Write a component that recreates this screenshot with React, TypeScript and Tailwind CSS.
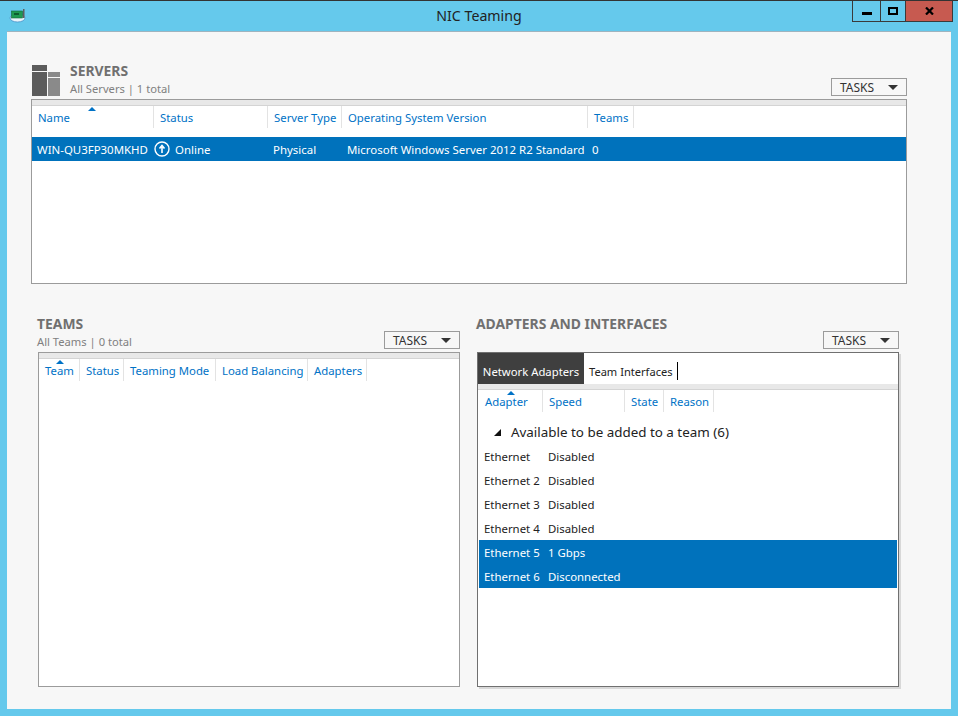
import React from "react";

const FONT = "font-['Open_Sans','Noto_Sans',sans-serif]";

function Tasks() {
  return (
    <div className="flex h-[18px] w-[76px] items-center border border-[#9b9b9b] bg-[#f7f7f7] pl-[8px] pr-[8px] text-[12px] text-[#333]">
      <span className="flex-1 pt-px">TASKS</span>
      <span className="h-0 w-0 border-x-[5px] border-t-[5px] border-x-transparent border-t-[#333]" />
    </div>
  );
}

function Strip() {
  return <div className="h-[6px] border-b border-[#d4d4d4] bg-[#e8e8e8]" />;
}

function Header({ cols, sortX }: { cols: [string, number][]; sortX: number }) {
  return (
    <div className="relative flex h-[25px] text-[11.35px] text-[#0072c6]">
      <span
        className="absolute top-px h-0 w-0 border-x-[4px] border-b-[4px] border-x-transparent border-b-[#0072c6]"
        style={{ left: sortX }}
      />
      {cols.map(([t, w]) => (
        <div
          key={t}
          style={{ width: w }}
          className="flex h-[22px] shrink-0 items-center border-r border-[#e3e3e3] pl-[6px] pt-[2px] whitespace-nowrap"
        >
          {t}
        </div>
      ))}
    </div>
  );
}

function Row({ a, b, sel }: { a: string; b: string; sel?: boolean }) {
  return (
    <div className={`flex h-[24px] items-center pt-[2px] text-[11.4px] ${sel ? "bg-[#0072bc] text-white" : "text-[#222]"}`}>
      <span className="w-[69px] pl-[5px] whitespace-nowrap">{a}</span>
      <span className="whitespace-nowrap">{b}</span>
    </div>
  );
}

export default function App() {
  return (
    <div className={`flex h-[716px] w-[958px] flex-col overflow-hidden border-t border-[#333] bg-[#65c9ec] ${FONT}`}>
      <div className="grid h-[30px] grid-cols-[1fr_auto_1fr]">
        <div className="pl-[9px] pt-[5px]">
          <svg width="17" height="17" viewBox="0 0 17 17">
            <ellipse cx="8.5" cy="12" rx="7.5" ry="4" fill="#e8f3fa" stroke="#4a90c8" strokeWidth="0.8" />
            <rect x="2.5" y="5" width="11" height="7" fill="#1f9a50" stroke="#14643a" strokeWidth="0.6" />
            <rect x="5" y="7" width="5" height="2" fill="#0d5c30" />
            <rect x="14" y="3" width="1.5" height="9" fill="#5d5d5d" />
          </svg>
        </div>
        <div className="pt-[6px] text-[14.2px] leading-[18px] text-[#222]">NIC Teaming</div>
        <div className="flex justify-end pr-[5px]">
          <div className="flex h-[21px] border border-t-0 border-[#3a3a3a]">
            <div className="flex w-[28px] items-end justify-center border-r border-[#3a3a3a] pb-[6px]">
              <div className="h-[3px] w-[10px] bg-black" />
            </div>
            <div className="flex w-[25px] items-start justify-center border-r border-[#3a3a3a] pt-[6px]">
              <div className="h-[8px] w-[10px] border-2 border-black" />
            </div>
            <div className="flex w-[46px] items-center justify-center bg-[#c75a50]">
              <svg width="9" height="8" viewBox="0 0 9 8">
                <path d="M1 0.5 L8 7.5 M8 0.5 L1 7.5" stroke="#000" strokeWidth="2.2" />
              </svg>
            </div>
          </div>
        </div>
      </div>

      <main className="ml-[7px] flex h-[678px] w-[944px] flex-col border-t border-[#9fb4bf] bg-[#f7f7f7] pl-[24px]">
        {/* Servers */}
        <section className="flex w-[876px] flex-col pt-[33px]">
          <div className="flex h-[34px] items-end">
            <svg width="29" height="31" viewBox="0 0 29 31" className="mb-[3px] ml-[1px] shrink-0">
              <rect x="0" y="0" width="15" height="6" fill="#5c5c5c" />
              <rect x="0" y="7" width="15" height="24" fill="#5c5c5c" />
              <rect x="16" y="7" width="12" height="5" fill="#8a8a8a" />
              <rect x="16" y="13" width="12" height="18" fill="#8a8a8a" />
            </svg>
            <div className="ml-[9px] flex-1 pb-[1px]">
              <div className="pb-px text-[13.9px] leading-[16px] font-bold text-[#707070]">SERVERS</div>
              <div className="text-[11.2px] leading-[18px] text-[#808080]">All Servers | 1 total</div>
            </div>
            <div className="pb-[3px]">
              <Tasks />
            </div>
          </div>
          <div className="h-[185px] border border-[#9b9b9b] bg-white">
            <Strip />
            <Header
              sortX={56}
              cols={[
                ["Name", 122],
                ["Status", 114],
                ["Server Type", 74],
                ["Operating System Version", 246],
                ["Teams", 46],
              ]}
            />
            <div className="mt-[6px] flex h-[24px] items-center bg-[#0072bc] pt-px text-[11.45px] whitespace-nowrap text-white">
              <span className="w-[122px] pl-[5px]">WIN-QU3FP30MKHD</span>
              <span className="flex w-[114px] items-center gap-[5px]">
                <svg width="16" height="16" viewBox="0 0 16 16">
                  <circle cx="8" cy="8" r="7" fill="none" stroke="#fff" strokeWidth="1.4" />
                  <path d="M8 12V6M5.5 7.5L8 4.5L10.5 7.5" fill="none" stroke="#fff" strokeWidth="1.6" />
                </svg>
                Online
              </span>
              <span className="w-[74px] pl-[5px]">Physical</span>
              <span className="w-[245px] pl-[5px]">Microsoft Windows Server 2012 R2 Standard</span>
              <span className="pl-[5px]">0</span>
            </div>
          </div>
        </section>

        <div className="mt-[32px] flex">
          {/* Teams */}
          <section className="ml-[7px] flex w-[422px] flex-col">
            <div className="flex h-[36px] items-start">
              <div className="-ml-[1px] flex-1">
                <div className="text-[13.9px] leading-[16px] font-bold text-[#707070]">TEAMS</div>
                <div className="pt-[1px] text-[11.2px] leading-[18px] text-[#808080]">All Teams | 0 total</div>
              </div>
              <div className="pt-[15px]">
                <Tasks />
              </div>
            </div>
            <div className="h-[335px] border border-[#9b9b9b] bg-white">
              <Strip />
              <Header
                sortX={17}
                cols={[
                  ["Team", 41],
                  ["Status", 44],
                  ["Teaming Mode", 92],
                  ["Load Balancing", 92],
                  ["Adapters", 59],
                ]}
              />
            </div>
          </section>

          {/* Adapters */}
          <section className="ml-[17px] flex w-[422px] flex-col">
            <div className="flex h-[36px] items-start">
              <div className="-ml-[1px] flex-1 text-[13.9px] leading-[16px] font-bold whitespace-nowrap text-[#707070]">
                ADAPTERS AND INTERFACES
              </div>
              <div className="pt-[15px]">
                <Tasks />
              </div>
            </div>
            <div className="h-[335px] border border-[#707070] bg-white shadow-[2px_2px_0_#d8d8d8]">
              <div className="flex h-[31px]">
                <div className="flex w-[106px] items-center justify-center bg-[#3f3f3f] pt-[8px] text-[11.3px] whitespace-nowrap text-white">
                  Network Adapters
                </div>
                <div className="ml-[5px] flex items-center pt-[8px] text-[11.1px] whitespace-nowrap text-[#222]">
                  Team Interfaces
                </div>
                <div className="mt-[9px] ml-[4px] h-[18px] w-px bg-black" />
              </div>
              <Strip />
              <div className="ml-px">
                <Header
                  sortX={28}
                  cols={[
                    ["Adapter", 64],
                    ["Speed", 82],
                    ["State", 39],
                    ["Reason", 50],
                  ]}
                />
              </div>
              <div className="flex h-[29px] items-center pl-[16px] pt-[5px] text-[13.4px] text-[#222]">
                <svg width="7" height="7" viewBox="0 0 7 7">
                  <path d="M7 0V7H0Z" fill="#111" />
                </svg>
                <span className="ml-[10px] whitespace-nowrap">Available to be added to a team (6)</span>
              </div>
              <div className="ml-px w-[418px]">
                <Row a="Ethernet" b="Disabled" />
                <Row a="Ethernet 2" b="Disabled" />
                <Row a="Ethernet 3" b="Disabled" />
                <Row a="Ethernet 4" b="Disabled" />
                <Row a="Ethernet 5" b="1 Gbps" sel />
                <Row a="Ethernet 6" b="Disconnected" sel />
              </div>
            </div>
          </section>
        </div>
      </main>
    </div>
  );
}
